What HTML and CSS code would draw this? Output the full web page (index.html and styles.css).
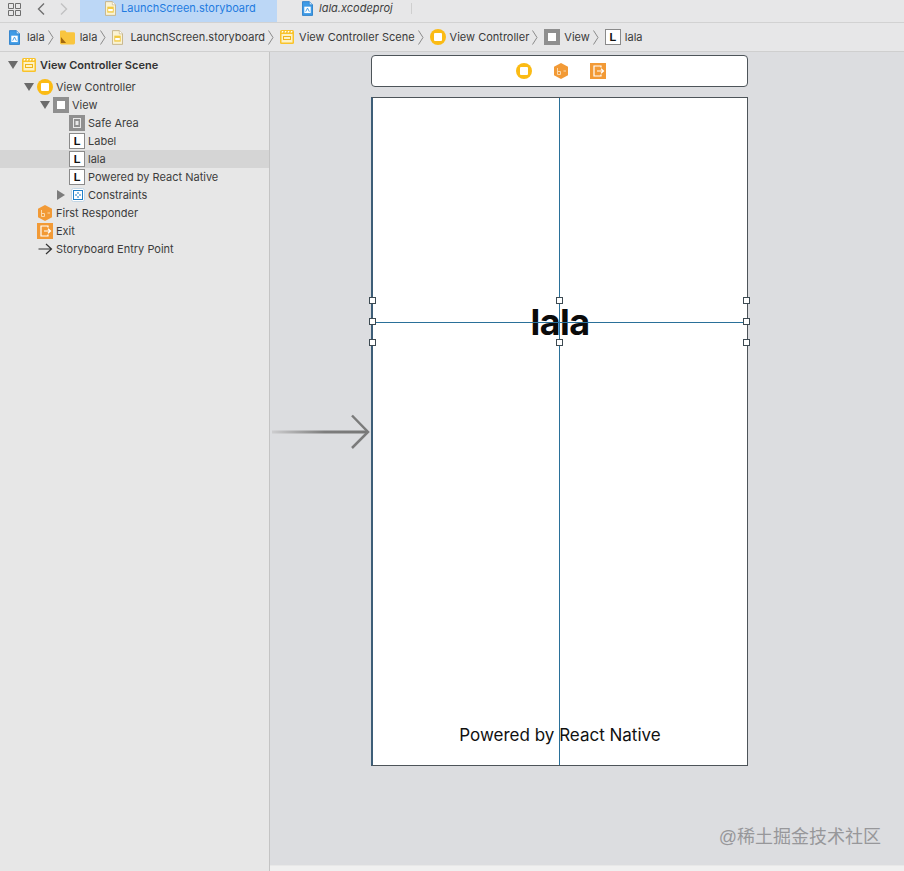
FILE: index.html
```html
<!DOCTYPE html>
<html lang="en">
<head>
<meta charset="utf-8">
<title>LaunchScreen.storyboard</title>
<link rel="stylesheet" href="styles.css">
</head>
<body>
<svg class="defs" width="0" height="0" aria-hidden="true">
  <symbol id="i-file" viewBox="0 0 12 16">
    <path d="M.5.5h7.500l3.500 3.500v11.500H.5z" fill="#3f9be6" stroke="#2c7fc9"/>
    <path d="M8 .5v3.500h3.500" fill="#cfe6fa" stroke="#2c7fc9" stroke-width=".7"/>
    <rect x="2.500" y="6" width="7" height="7" fill="#fff"/>
    <path d="M4 11.500 6 7.500l2 4" fill="none" stroke="#3f9be6"/>
  </symbol>
  <symbol id="i-story" viewBox="0 0 12 16">
    <path d="M.5.5h7.500l3.500 3.500v11.500H.5z" fill="#faf3d4" stroke="#c4b184"/>
    <path d="M8 .5v3.500h3.500" fill="#fff" stroke="#c4b184" stroke-width=".7"/>
    <rect x="2.500" y="6" width="7" height="6.500" fill="#f2c93f"/>
    <rect x="3.500" y="8.500" width="5" height="2.500" fill="#fff"/>
  </symbol>
  <symbol id="i-folder" viewBox="0 0 16 16">
    <path d="M0 2.500Q0 1 1.500 1h4l1.500 2h7.500Q16 3 16 4.500V14.500Q16 16 14.500 16h-13Q0 16 0 14.500z" fill="#f9c53e"/>
    <path d="M1 14.500 1 8 6.500 14.500z" fill="#a3690f"/>
  </symbol>
  <symbol id="i-scene" viewBox="0 0 14 14">
    <rect width="14" height="14" rx="1.500" fill="#f9c32a"/>
    <path d="M2 1h1.500l-.5 1.500H1.500zM5 1h1.500L6 2.500H4.500zM8 1h1.500L9 2.500H7.500zM11 1h1.500L12 2.500h-1.500z" fill="#fff"/>
    <rect x="1.500" y="4" width="11" height="8.500" fill="#fdf2c6"/>
    <rect x="3.500" y="6.500" width="7" height="3" fill="none" stroke="#eeb51c"/>
  </symbol>
  <symbol id="i-vc" viewBox="0 0 16 16">
    <circle cx="8" cy="8" r="8" fill="#fbbb14"/>
    <rect x="4" y="4" width="8" height="8" rx="1" fill="#fff"/>
  </symbol>
  <symbol id="i-view" viewBox="0 0 16 16">
    <rect width="16" height="16" fill="#8f8f8f"/>
    <rect x="4" y="4" width="8" height="8" fill="#fff"/>
  </symbol>
  <symbol id="i-safe" viewBox="0 0 16 16">
    <rect width="16" height="16" fill="#8f8f8f"/>
    <rect x="4.500" y="3.500" width="7" height="9" fill="none" stroke="#e8e8e8"/>
    <rect x="6.500" y="6" width="3" height="4" fill="#e8e8e8"/>
  </symbol>
  <symbol id="i-cons" viewBox="0 0 14 14">
    <rect x=".5" y=".5" width="13" height="13" rx="2" fill="#fff" stroke="#c3d6e4"/>
    <rect x="2.500" y="2.500" width="9" height="9" fill="none" stroke="#1f7fc9"/>
    <path d="M7 4v2M7 8v2M4 7h2M8 7h2" stroke="#1f7fc9"/>
  </symbol>
  <symbol id="i-cube" viewBox="0 0 16 16">
    <path d="M8 0l7 3.800v8.400L8 16l-7-3.800V3.800z" fill="#f29a36"/>
    <path d="M4.500 5v6.500h3V8.500h-3M10.500 8h2.500" fill="none" stroke="#fbd9ac" stroke-width="1"/>
  </symbol>
  <symbol id="i-exit" viewBox="0 0 16 16">
    <rect width="16" height="16" fill="#f29a36"/>
    <path d="M11 4.500V3H4v10h7v-1.500" fill="none" stroke="#fff" stroke-width="1.200"/>
    <path d="M7 8h6M11 5.800 13.500 8 11 10.200" fill="none" stroke="#fff" stroke-width="1.200"/>
  </symbol>
  <symbol id="i-sep" viewBox="0 0 6 15">
    <path d="M.5.5 5 7.500.5 14.500" fill="none" stroke="#8a8a8a"/>
  </symbol>
</svg>

<header class="tabbar">
  <div class="tools">
    <svg class="grid-ico" width="13" height="13" viewBox="0 0 13 13"><path d="M.5.5h5v5h-5zM7.500.5h5v5h-5zM.5 7.500h5v5h-5zM7.500 7.500h5v5h-5z" fill="none" stroke="#6f6f6f"/></svg>
    <svg class="back-ico" width="8" height="12" viewBox="0 0 8 12"><path d="M7 .5 1.500 6 7 11.500" fill="none" stroke="#707070" stroke-width="1.400"/></svg>
    <svg class="fwd-ico" width="8" height="12" viewBox="0 0 8 12"><path d="M1 .5 6.500 6 1 11.500" fill="none" stroke="#c2c2c2" stroke-width="1.400"/></svg>
  </div>
  <div class="tab tab-active"><svg class="tab-ico"><use href="#i-story"/></svg><span>LaunchScreen.storyboard</span></div>
  <div class="tab tab-plain"><svg class="tab-ico"><use href="#i-file"/></svg><span>lala.xcodeproj</span></div>
</header>

<nav class="pathbar">
  <svg class="p-ico file"><use href="#i-file"/></svg><span>lala</span><svg class="sep"><use href="#i-sep"/></svg>
  <svg class="p-ico folder"><use href="#i-folder"/></svg><span>lala</span><svg class="sep"><use href="#i-sep"/></svg>
  <svg class="p-ico file"><use href="#i-story"/></svg><span>LaunchScreen.storyboard</span><svg class="sep"><use href="#i-sep"/></svg>
  <svg class="p-ico sq"><use href="#i-scene"/></svg><span>View Controller Scene</span><svg class="sep"><use href="#i-sep"/></svg>
  <svg class="p-ico sq16"><use href="#i-vc"/></svg><span>View Controller</span><svg class="sep"><use href="#i-sep"/></svg>
  <svg class="p-ico sq16"><use href="#i-view"/></svg><span>View</span><svg class="sep"><use href="#i-sep"/></svg>
  <b class="lbl">L</b><span>lala</span>
</nav>

<main class="workspace">
  <aside class="outline">
    <div class="row scene d0"><i class="tri"></i><svg class="ico ico14"><use href="#i-scene"/></svg><span>View Controller Scene</span></div>
    <div class="row d1"><i class="tri"></i><svg class="ico"><use href="#i-vc"/></svg><span>View Controller</span></div>
    <div class="row d2"><i class="tri"></i><svg class="ico"><use href="#i-view"/></svg><span>View</span></div>
    <div class="row d3"><svg class="ico"><use href="#i-safe"/></svg><span>Safe Area</span></div>
    <div class="row d3"><b class="lbl">L</b><span>Label</span></div>
    <div class="row d3 selected"><b class="lbl">L</b><span>lala</span></div>
    <div class="row d3"><b class="lbl">L</b><span>Powered by React Native</span></div>
    <div class="row d2b"><i class="tri closed"></i><svg class="ico ico14"><use href="#i-cons"/></svg><span>Constraints</span></div>
    <div class="row d1b"><svg class="ico"><use href="#i-cube"/></svg><span>First Responder</span></div>
    <div class="row d1b"><svg class="ico"><use href="#i-exit"/></svg><span>Exit</span></div>
    <div class="row d1b"><svg class="ico" viewBox="0 0 16 16"><path d="M1.500 8h13M9 3l5.500 5L9 13" fill="none" stroke="#333" stroke-width="1.200"/></svg><span>Storyboard Entry Point</span></div>
  </aside>

  <section class="canvas">
    <div class="scene-dock">
      <svg class="dock-ico"><use href="#i-vc"/></svg>
      <svg class="dock-ico"><use href="#i-cube"/></svg>
      <svg class="dock-ico"><use href="#i-exit"/></svg>
    </div>
    <svg class="entry-arrow" width="100" height="36" viewBox="0 0 100 36">
      <defs><linearGradient id="fade" x1="0" x2="1"><stop offset="0" stop-color="#cdcdcf"/><stop offset=".55" stop-color="#7d7d7d"/><stop offset="1" stop-color="#777"/></linearGradient></defs>
      <rect x="0" y="16.500" width="96" height="3" fill="url(#fade)"/>
      <path d="M80 1.500 96 18 80 34" fill="none" stroke="#7b7b7b" stroke-width="2.500"/>
    </svg>
    <div class="device">
      <div class="guide-v"></div>
      <div class="guide-h"></div>
      <div class="title">lala</div>
      <div class="powered">Powered by React Native</div>
      <i class="hd h1"></i><i class="hd h2"></i><i class="hd h3"></i>
      <i class="hd h4"></i><i class="hd h5"></i><i class="hd h6"></i>
      <i class="hd h7"></i><i class="hd h8"></i>
    </div>
    <div class="watermark">@稀土掘金技术社区</div>
  </section>
</main>
<div class="bottom"><div class="bottom-left"></div><div class="bottom-right"></div></div>
</body>
</html>
```

FILE: styles.css
```css
* { box-sizing: border-box; }
html, body { margin: 0; padding: 0; }
body {
  width: 904px; height: 871px; overflow: hidden;
  display: flex; flex-direction: column;
  background: #e6e6e6;
  font-family: "Inter", "Liberation Sans", sans-serif;
  font-size: 11px; color: #3a3a3a;
}
.defs { position: absolute; }

.tabbar { height: 23px; flex: none; display: flex; background: #e7e7e8; border-bottom: 1px solid #d2d2d2; }
.tools { width: 80px; display: flex; align-items: flex-start; padding: 3px 0 0 8px; }
.grid-ico { margin-right: 16px; }
.back-ico { margin-right: 15px; }
.tab { display: flex; align-items: center; height: 22px; padding-bottom: 6px; }
.tab-active { width: 197px; padding-left: 25px; background: #bcd7f6; color: #1f7be0; }
.tab-active .tab-ico { margin-right: 5px; }
.tab-plain { padding-left: 25px; font-style: italic; color: #3f3f3f; width: 135px; position: relative; }
.tab-plain::after { content: ""; position: absolute; right: 0; top: 3px; height: 11px; width: 1px; background: #cfcfcf; }
.tab-plain .tab-ico { margin-right: 6px; }
.tab-ico { width: 11px; height: 15px; flex: none; }

.pathbar { height: 29px; flex: none; display: flex; align-items: center; padding-left: 9px; background: #e7e7e8; border-bottom: 1px solid #cfcfcf; color: #3a3a3a; }
.pathbar span { white-space: nowrap; }
.p-ico { flex: none; margin-right: 6px; }
.p-ico.file { width: 11px; height: 15px; margin-right: 7px; }
.p-ico.folder { width: 15px; height: 16px; margin-right: 5px; }
.p-ico.sq { width: 14px; height: 14px; margin-right: 5px; }
.p-ico.sq16 { width: 16px; height: 16px; margin-right: 4px; }
.sep { flex: none; width: 6px; height: 15px; margin: 0 6px 0 3px; }

.lbl { flex: none; display: inline-flex; align-items: center; justify-content: center; width: 16px; height: 16px; background: #fff; border: 1px solid #8a8a8a; font-size: 11px; font-weight: 700; color: #111; margin-right: 3px; font-family: "Liberation Sans", sans-serif; }
.pathbar .lbl { margin-right: 4px; }

.workspace { flex: 1; display: flex; min-height: 0; }
.outline { width: 270px; flex: none; background: #e7e7e7; border-right: 1px solid #c4c4c4; padding-top: 4px; }
.row { height: 18px; display: flex; align-items: center; color: #3c3c3c; }
.row.scene { margin-bottom: 4px; font-weight: 600; color: #333; padding-left: 8px; }
.row.selected { background: #d5d5d5; }
.d1 { padding-left: 24px; }
.d2 { padding-left: 40px; }
.d3 { padding-left: 69px; }
.d2b { padding-left: 57px; }
.d1b { padding-left: 37px; }
.ico { width: 16px; height: 16px; flex: none; margin-right: 3px; }
.ico14 { width: 14px; height: 14px; }
.scene .ico14 { margin-right: 4px; }
.tri { flex: none; width: 0; height: 0; border-left: 5px solid transparent; border-right: 5px solid transparent; border-top: 8px solid #6b6b6b; margin-right: 3px; }
.scene .tri { margin-right: 4px; }
.tri.closed { border: 0; border-top: 5px solid transparent; border-bottom: 5px solid transparent; border-left: 8px solid #7c7c7c; margin-right: 6px; }
.row span { white-space: nowrap; }

.canvas { flex: 1; position: relative; background: #dcdde0; }
.scene-dock { position: absolute; left: 101px; top: 3px; width: 377px; height: 32px; background: #fff; border: 1px solid #4d5459; border-radius: 4px; }
.dock-ico { position: absolute; width: 16px; height: 16px; top: 7px; }
.dock-ico:nth-child(1) { left: 144px; }
.dock-ico:nth-child(2) { left: 181px; }
.dock-ico:nth-child(3) { left: 218px; }
.entry-arrow { position: absolute; left: 2px; top: 362px; }
.device { position: absolute; left: 101px; top: 45px; width: 377px; height: 669px; background: #fff; border: 1px solid #4d5459; border-left: 2px solid #3d5e78; }
.guide-v { position: absolute; left: 186px; top: 0; bottom: 0; width: 1px; background: #2a7099; z-index: 2; }
.guide-h { position: absolute; left: 0; right: 0; top: 224px; height: 1px; background: #2a7099; z-index: 2; }
.title { position: absolute; left: 0; right: 0; top: 203px; text-align: center; font-size: 36px; line-height: 42px; font-weight: 700; color: #0a0a0a; font-family: "Inter", "Liberation Sans", sans-serif; letter-spacing: -.6px; }
.powered { position: absolute; left: 0; right: 0; top: 626px; text-align: center; font-size: 17px; line-height: 22px; color: #111; }
.hd { position: absolute; width: 7px; height: 7px; background: #fff; border: 1px solid #3d4a52; z-index: 3; }
.h1 { left: -4px; top: 199px; }
.h2 { left: 183px; top: 199px; }
.h3 { left: 370px; top: 199px; }
.h4 { left: -4px; top: 220px; }
.h5 { left: 370px; top: 220px; }
.h6 { left: -4px; top: 241px; }
.h7 { left: 183px; top: 241px; }
.h8 { left: 370px; top: 241px; }
.watermark { position: absolute; right: 23px; top: 773px; font-size: 18px; line-height: 24px; color: #97979a; font-family: "Liberation Sans", "Noto Sans CJK SC", sans-serif; }
.bottom { flex: none; height: 6px; display: flex; }
.bottom-left { width: 270px; background: #e7e7e7; border-right: 1px solid #c4c4c4; }
.bottom-right { flex: 1; background: #f0f0f0; border-top: 1px solid #e8e8e8; }
```
